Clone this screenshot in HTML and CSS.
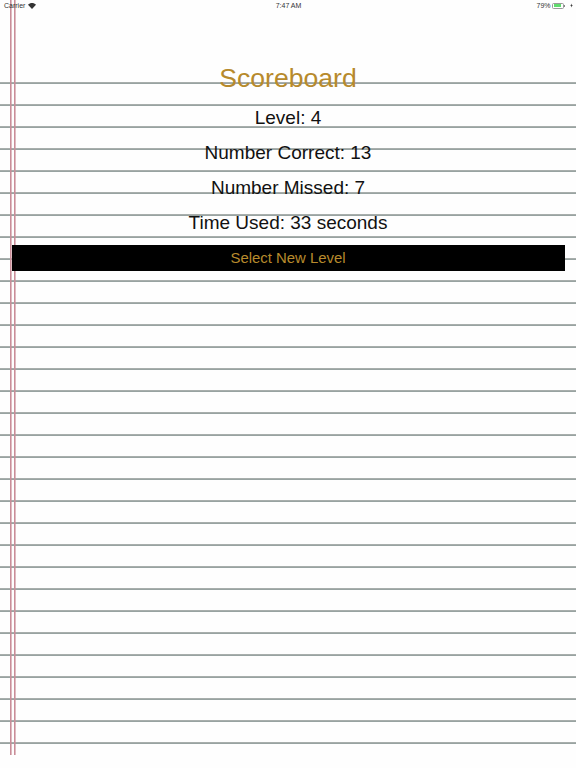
FILE: index.html
```html
<!DOCTYPE html>
<html lang="en">
<head>
<meta charset="utf-8">
<title>Scoreboard</title>
<link rel="stylesheet" href="styles.css">
</head>
<body>
<div class="page">
  <header class="status">
    <div class="status-left">
      <span>Carrier</span>
      <svg class="wifi" viewBox="0 0 12 9" width="8" height="6"><path d="M6 9 0 2.8C3.4-.9 8.6-.9 12 2.8Z" fill="#333"/></svg>
    </div>
    <div class="status-time">7:47 AM</div>
    <div class="status-right">
      <span>79%</span>
      <span class="battery"><span class="battery-fill"></span></span>
      <span class="battery-cap"></span>
      <svg class="bolt" viewBox="0 0 6 8" width="3" height="5"><path d="M3.6 0 .5 4.5h2L2 8l3.5-5H3.3Z" fill="#333"/></svg>
    </div>
  </header>
  <main class="board">
    <h1 class="title">Scoreboard</h1>
    <p class="stat">Level: 4</p>
    <p class="stat">Number Correct: 13</p>
    <p class="stat">Number Missed: 7</p>
    <p class="stat">Time Used: 33 seconds</p>
    <button class="action" type="button">Select New Level</button>
  </main>
</div>
</body>
</html>
```
FILE: styles.css
```css
* { box-sizing: border-box; }
html, body { margin: 0; padding: 0; }
body {
  width: 576px;
  height: 768px;
  overflow: hidden;
  background: #fff;
  font-family: "Liberation Sans", Arial, sans-serif;
  color: #111;
}
.page {
  width: 576px;
  height: 768px;
  background-color: #fefefe;
  background-image:
    linear-gradient(#c98d98, #c98d98),
    linear-gradient(#c98d98, #c98d98),
    repeating-linear-gradient(to bottom, #a8aeac 0, #a8aeac 1px, #98a3a1 1px, #98a3a1 2px, transparent 2px, transparent 22px);
  background-size: 1.6px 755px, 1.6px 755px, 576px 662px;
  background-position: 10.4px 0, 14px 0, 0 82px;
  background-repeat: no-repeat;
}
.status {
  display: grid;
  grid-template-columns: 1fr auto 1fr;
  align-items: center;
  height: 11px;
  padding: 0 3px 0 4px;
  font-size: 7px;
  color: #333;
}
.status-left { display: flex; align-items: center; gap: 3px; }
.status-time { text-align: center; }
.status-right { display: flex; align-items: center; justify-content: flex-end; gap: 1.5px; }
.wifi { display: block; }
.battery {
  display: block;
  width: 12px;
  height: 6px;
  padding: 0.5px;
  border: 0.5px solid #999;
  border-radius: 1.5px;
}
.battery-fill { display: block; width: 85%; height: 100%; background: #5fdc6e; }
.battery-cap { display: block; width: 1px; height: 2px; margin-left: -1.5px; background: #888; }
.bolt { display: block; margin-left: 3.5px; }
.board {
  display: flex;
  flex-direction: column;
  align-items: center;
  padding: 51px 11.5px 0;
}
.title {
  margin: 0;
  height: 32px;
  font-size: 26.6px;
  line-height: 32px;
  font-weight: 400;
  color: #b78a2c;
}
.stat {
  margin: 8px 0 0;
  height: 27px;
  font-size: 19px;
  line-height: 27px;
}
.title + .stat { margin-top: 10px; }
.action {
  display: block;
  width: 553px;
  height: 26px;
  margin-top: 9px;
  padding: 0;
  border: 0;
  background: #000;
  color: #b78a2c;
  font: 400 14.9px/26px "Liberation Sans", Arial, sans-serif;
}
```
